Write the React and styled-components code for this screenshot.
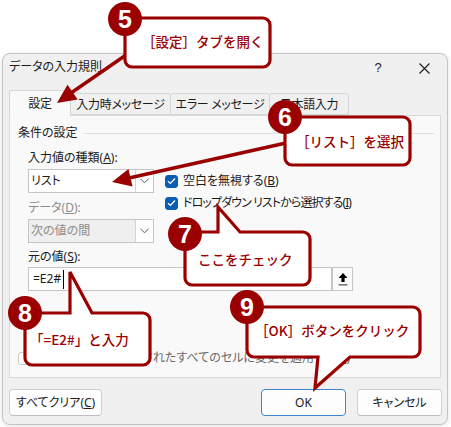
import React from "react";
import styled, { createGlobalStyle } from "styled-components";

const RED = "#9b0000";
const UI_FONT = `"Noto Sans", "Noto Sans CJK JP", sans-serif`;

const Global = createGlobalStyle`
  html, body { margin: 0; padding: 0; background: #ffffff; }
  body { font-family: ${UI_FONT}; }
`;

const Stage = styled.div`
  position: relative;
  width: 451px;
  height: 427px;
  overflow: hidden;
  box-sizing: border-box;
  padding: 53px 0 0 2px;
`;

const Dialog = styled.div`
  width: 446px;
  height: 372px;
  box-sizing: border-box;
  border: 1px solid #c4c4c4;
  border-radius: 8px;
  background: #f0f0f0;
  box-shadow: 0 1px 5px rgba(0, 0, 0, 0.12);
  display: flex;
  flex-direction: column;
  font-size: 12px;
  line-height: 14px;
  font-feature-settings: "palt";
  color: #1b1b1b;
`;

const TitleBar = styled.div`
  display: flex;
  align-items: center;
  height: 26px;
  padding-left: 6px;
  flex-shrink: 0;
`;

const TitleText = styled.div`
  flex: 1;
`;

const CaptionButton = styled.div`
  width: 46px;
  height: 26px;
  display: flex;
  align-items: center;
  justify-content: center;
  margin-top: 2px;
  font-family: "Liberation Sans", sans-serif;
  font-size: 13px;
`;

const TabRow = styled.div`
  display: flex;
  align-items: flex-end;
  height: 25px;
  margin: 10px 6px 0 6px;
  flex-shrink: 0;
`;

const Tab = styled.div`
  position: relative;
  z-index: ${(p) => (p.$active ? 2 : 1)};
  box-sizing: border-box;
  width: ${(p) => p.$w}px;
  height: ${(p) => (p.$active ? 26 : 22)}px;
  margin-left: ${(p) => (p.$first ? 0 : -1)}px;
  margin-bottom: ${(p) => (p.$active ? -1 : 0)}px;
  border: 1px solid #d6d6d6;
  border-bottom: ${(p) => (p.$active ? "none" : "1px solid #d6d6d6")};
  border-radius: 3px 3px 0 0;
  background: ${(p) => (p.$active ? "#f9f9f9" : "#f0f0f0")};
  display: flex;
  align-items: center;
  justify-content: center;
  padding-top: ${(p) => (p.$active ? 0 : 1)}px;
  letter-spacing: -0.3px;
  white-space: nowrap;
`;

const Panel = styled.div`
  height: 263px;
  box-sizing: border-box;
  margin: 0 6px;
  border: 1px solid #d9d9d9;
  background: #f9f9f9;
  padding-left: 8px;
  flex-shrink: 0;
`;

const GroupTitle = styled.div`
  display: flex;
  align-items: center;
  gap: 6px;
  margin: 10px 6px 0 0;
  height: 14px;
`;

const Rule = styled.div`
  flex: 1;
  height: 1px;
  background: #dedede;
`;

const Fields = styled.div`
  padding-left: 10px;
`;

const FieldLabel = styled.div`
  margin-top: ${(p) => p.$mt ?? 11}px;
  height: 14px;
  color: ${(p) => (p.$disabled ? "#8c8c8c" : "#1b1b1b")};
  white-space: nowrap;
`;

const SelectRow = styled.div`
  display: flex;
  align-items: flex-start;
  margin-top: 4px;
`;

const LeftCol = styled.div`
  display: flex;
  flex-direction: column;
  width: 126px;
`;

const Combo = styled.div`
  display: flex;
  box-sizing: border-box;
  width: 126px;
  height: 24px;
  margin-top: ${(p) => p.$mt ?? 0}px;
  border: 1px solid #c6c6c6;
  background: ${(p) => (p.$disabled ? "#efefef" : "#ffffff")};
  color: ${(p) => (p.$disabled ? "#8c8c8c" : "#1b1b1b")};
`;

const ComboValue = styled.div`
  flex: 1;
  display: flex;
  align-items: center;
  padding-left: 2px;
`;

const ChevronBox = styled.div`
  width: 17px;
  border-left: 1px solid #d4d4d4;
  background: #ffffff;
  display: flex;
  align-items: center;
  justify-content: center;
`;

const Checks = styled.div`
  display: flex;
  flex-direction: column;
  margin-left: 11px;
  padding-top: 1px;
`;

const CheckRow = styled.div`
  display: flex;
  align-items: center;
  gap: 5px;
  height: ${(p) => p.$h ?? 22}px;
  margin-top: ${(p) => p.$mt ?? 0}px;
  white-space: nowrap;
  color: ${(p) => p.$color ?? "#1b1b1b"};
`;

const CheckLabel = styled.span`
  white-space: nowrap;
  letter-spacing: ${(p) => (p.$tight ? "-0.9px" : "0")};
`;

const CheckBox = styled.div`
  width: 13px;
  height: 13px;
  box-sizing: border-box;
  border-radius: 3px;
  flex-shrink: 0;
  background: ${(p) => (p.$checked ? "#0a5db4" : "#ffffff")};
  border: 1px solid ${(p) => (p.$checked ? "#0a5db4" : "#c9c9c9")};
  display: flex;
  align-items: center;
  justify-content: center;
`;

const SourceRow = styled.div`
  display: flex;
  margin-top: 3px;
  height: 24px;
`;

const TextInput = styled.div`
  box-sizing: border-box;
  width: 304px;
  height: 24px;
  border: 1px solid #c6c6c6;
  background: #ffffff;
  display: flex;
  align-items: center;
  padding-left: 4px;
  font-size: 12px;
`;

const Caret = styled.span`
  display: inline-block;
  width: 1px;
  height: 19px;
  margin-left: 2px;
  background: #000;
`;

const RefButton = styled.div`
  box-sizing: border-box;
  width: 21px;
  height: 24px;
  border: 1px solid #c6c6c6;
  background: #fbfbfb;
  display: flex;
  align-items: center;
  justify-content: center;
`;

const Footer = styled.div`
  display: flex;
  gap: 11px;
  margin: 11px 5px 0 6px;
`;

const Button = styled.div`
  box-sizing: border-box;
  width: ${(p) => p.$w}px;
  height: 27px;
  border-radius: 4px;
  border: 1px solid ${(p) => (p.$primary ? "#3f86cf" : "#d0d0d0")};
  border-bottom-color: ${(p) => (p.$primary ? "#3f86cf" : "#bdbdbd")};
  background: #fdfdfd;
  display: flex;
  align-items: center;
  justify-content: center;
  white-space: nowrap;
`;

const Spacer = styled.div`
  flex: 1;
`;

/* ---------- callouts ---------- */

const Overlay = styled.div`
  position: absolute;
  left: 0;
  top: 0;
  z-index: 10;
  width: 451px;
  height: 427px;
  pointer-events: none;
`;

const ArrowLayer = styled.svg`
  position: absolute;
  left: 0;
  top: 0;
`;

const CalloutBox = styled.div`
  position: absolute;
  left: ${(p) => p.$x}px;
  top: ${(p) => p.$y}px;
  width: ${(p) => p.$w}px;
  height: ${(p) => p.$h}px;
  box-sizing: border-box;
  display: flex;
  align-items: center;
  padding-left: ${(p) => p.$pad}px;
  padding-bottom: ${(p) => p.$lift ?? 0}px;
  font-family: "Noto Sans CJK JP", sans-serif;
  font-size: 13.5px;
  font-weight: 500;
  line-height: 16px;
  color: ${RED};
`;

const CalloutShape = styled.svg`
  position: absolute;
  left: 0;
  top: 0;
  overflow: visible;
`;

const CalloutText = styled.span`
  position: relative;
  white-space: nowrap;
`;

const Badge = styled.div`
  position: absolute;
  left: -17px;
  top: ${(p) => p.$top ?? -17}px;
  width: 34px;
  height: 34px;
  border-radius: 50%;
  background: ${RED};
  color: #ffffff;
  display: flex;
  align-items: center;
  justify-content: center;
  font-family: "Liberation Sans", Arial, sans-serif;
  font-weight: bold;
  font-size: 25px;
`;

function shapePath(w, h, ptr) {
  const r = 7;
  let d = `M ${r} 0 `;
  if (ptr && ptr.side === "top") {
    d += `L ${ptr.x1} 0 L ${ptr.tx} ${ptr.ty} L ${ptr.x2} 0 `;
  }
  d += `L ${w - r} 0 A ${r} ${r} 0 0 1 ${w} ${r} L ${w} ${h - r} A ${r} ${r} 0 0 1 ${w - r} ${h} `;
  if (ptr && ptr.side === "bottom") {
    d += `L ${ptr.x2} ${h} L ${ptr.tx} ${ptr.ty} L ${ptr.x1} ${h} `;
  }
  d += `L ${r} ${h} A ${r} ${r} 0 0 1 0 ${h - r} L 0 ${r} A ${r} ${r} 0 0 1 ${r} 0 Z`;
  return d;
}

function Callout({ n, x, y, w, h, pad, lift, ptr, badgeTop, children }) {
  return (
    <CalloutBox $x={x} $y={y} $w={w} $h={h} $pad={pad} $lift={lift}>
      <CalloutShape width={w} height={h}>
        <path
          d={shapePath(w, h, ptr)}
          fill="#ffffff"
          stroke={RED}
          strokeWidth="3.2"
          strokeLinejoin="miter"
        />
      </CalloutShape>
      <CalloutText>{children}</CalloutText>
      <Badge $top={badgeTop}>{n}</Badge>
    </CalloutBox>
  );
}

const Chevron = () => (
  <svg width="9" height="6" viewBox="0 0 9 6">
    <polyline points="0.5,0.8 4.5,4.8 8.5,0.8" fill="none" stroke="#5a5a5a" strokeWidth="1" />
  </svg>
);

const Tick = () => (
  <svg width="9" height="8" viewBox="0 0 9 8">
    <polyline points="1,4.2 3.4,6.4 8,1.5" fill="none" stroke="#ffffff" strokeWidth="1.3" />
  </svg>
);

const CloseIcon = () => (
  <svg width="11" height="11" viewBox="0 0 11 11">
    <path d="M0.5 0.5 L10.5 10.5 M10.5 0.5 L0.5 10.5" stroke="#1b1b1b" strokeWidth="1.1" />
  </svg>
);

const UploadIcon = () => (
  <svg width="10" height="13" viewBox="0 0 10 13">
    <polygon points="5,0 9.5,5 6.6,5 6.6,9 3.4,9 3.4,5 0.5,5" fill="#000" />
    <rect x="0.5" y="11" width="9" height="1.6" fill="#7a7a7a" />
  </svg>
);

export default function App() {
  return (
    <>
      <Global />
      <Stage>
        <Dialog>
          <TitleBar>
            <TitleText>データの入力規則</TitleText>
            <CaptionButton>?</CaptionButton>
            <CaptionButton>
              <CloseIcon />
            </CaptionButton>
          </TitleBar>

          <TabRow>
            <Tab $active $first $w={62}>設定</Tab>
            <Tab $w={101}>入力時メッセージ</Tab>
            <Tab $w={100}>エラー メッセージ</Tab>
            <Tab $w={80}>日本語入力</Tab>
          </TabRow>

          <Panel>
            <GroupTitle>
              <span>条件の設定</span>
              <Rule />
            </GroupTitle>
            <Fields>
              <FieldLabel>
                入力値の種類(<u>A</u>):
              </FieldLabel>
              <SelectRow>
                <LeftCol>
                  <Combo>
                    <ComboValue>リスト</ComboValue>
                    <ChevronBox>
                      <Chevron />
                    </ChevronBox>
                  </Combo>
                  <FieldLabel $disabled $mt={8}>
                    データ(<u>D</u>):
                  </FieldLabel>
                  <Combo $disabled $mt={4}>
                    <ComboValue>次の値の間</ComboValue>
                    <ChevronBox>
                      <Chevron />
                    </ChevronBox>
                  </Combo>
                </LeftCol>
                <Checks>
                  <CheckRow>
                    <CheckBox $checked>
                      <Tick />
                    </CheckBox>
                    <CheckLabel>
                      空白を無視する(<u>B</u>)
                    </CheckLabel>
                  </CheckRow>
                  <CheckRow>
                    <CheckBox $checked>
                      <Tick />
                    </CheckBox>
                    <CheckLabel $tight>
                      ドロップダウン リストから選択する(<u>I</u>)
                    </CheckLabel>
                  </CheckRow>
                </Checks>
              </SelectRow>
              <FieldLabel $mt={7}>
                元の値(<u>S</u>):
              </FieldLabel>
              <SourceRow>
                <TextInput>
                  =E2#
                  <Caret />
                </TextInput>
                <RefButton>
                  <UploadIcon />
                </RefButton>
              </SourceRow>
            </Fields>
            <CheckRow $h={14} $mt={60} $color="#6a6a6a">
              <CheckBox />
              <CheckLabel>
                同じ入力規則が設定されたすべてのセルに変更を適用する(<u>P</u>)
              </CheckLabel>
            </CheckRow>
          </Panel>

          <Footer>
            <Button $w={93}>
              <span>
                すべてクリア(<u>C</u>)
              </span>
            </Button>
            <Spacer />
            <Button $w={85} $primary>
              OK
            </Button>
            <Button $w={85}>キャンセル</Button>
          </Footer>
        </Dialog>

        <Overlay>
          <ArrowLayer width="451" height="427">
            <line x1="126" y1="55" x2="71" y2="93" stroke={RED} strokeWidth="3.4" />
            <polygon points="57,103 77.7,99.6 67.5,84.8" fill={RED} />
            <line x1="286" y1="143" x2="129" y2="178" stroke={RED} strokeWidth="3.4" />
            <polygon points="112,182 132.5,186.6 128.5,169" fill={RED} />
          </ArrowLayer>

          <Callout n="5" x={125} y={18} w={145} h={49} pad={17} lift={4} badgeTop={-16}>
            ［設定］タブを開く
          </Callout>
          <Callout n="6" x={285} y={117} w={125} h={48} pad={11}>
            ［リスト］を選択
          </Callout>
          <Callout
            n="7"
            x={185}
            y={232}
            w={125}
            h={53}
            pad={13}
            badgeTop={-15}
            ptr={{ side: "top", x1: 33, x2: 55, tx: 33, ty: -25 }}
          >
            ここをチェック
          </Callout>
          <Callout
            n="8"
            x={25}
            y={313}
            w={125}
            h={52}
            pad={5}
            ptr={{ side: "top", x1: 45, x2: 67, tx: 45, ty: -41 }}
          >
            「=E2#」と入力
          </Callout>
          <Callout
            n="9"
            x={247}
            y={307}
            w={173}
            h={50}
            pad={8}
            lift={4}
            ptr={{ side: "bottom", x1: 71, x2: 103, tx: 68, ty: 81 }}
          >
            ［OK］ボタンをクリック
          </Callout>
        </Overlay>
      </Stage>
    </>
  );
}
